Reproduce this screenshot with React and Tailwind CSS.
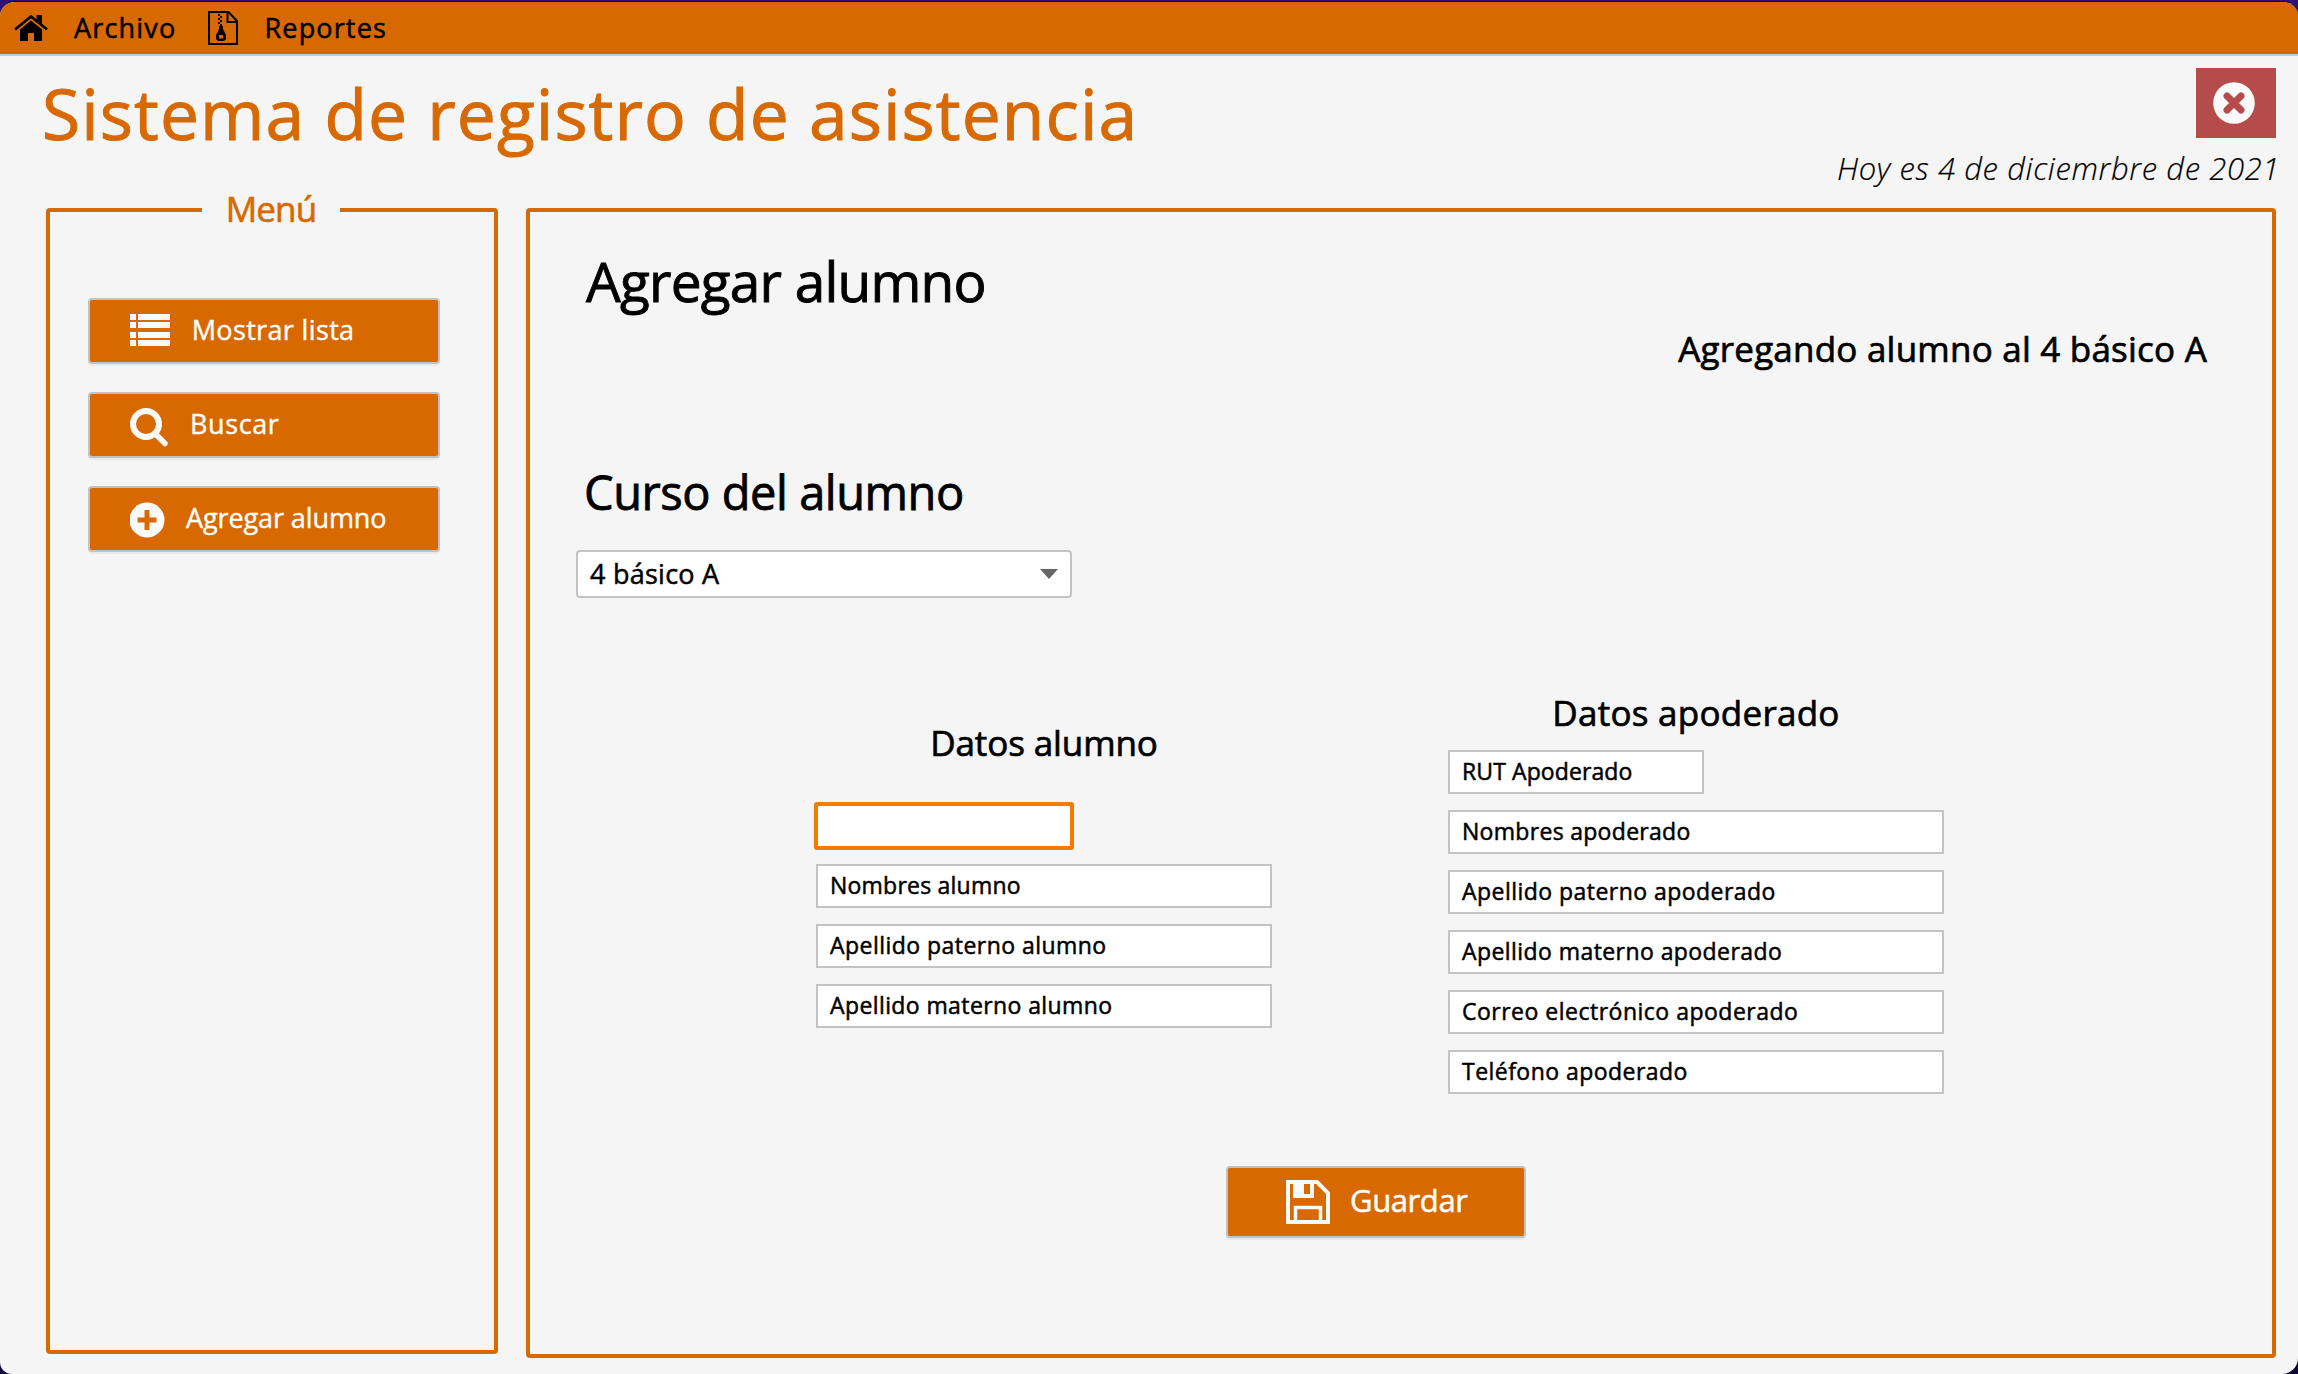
import React from "react";

function HomeIcon() {
  return (
    <svg className="ml-3.5 h-[28px] w-[34px]" viewBox="0 0 34 28">
      <path d="M1 15.500 L17 2.500 L33 15.500" fill="none" stroke="black" strokeWidth="2.8" />
      <path d="M22.500 1h5.500v9l-5.500-4.500z" />
      <path d="M17 6.500 28 15.500V27H20V19H14V27H6V15.500z" />
    </svg>
  );
}

function ZipIcon() {
  return (
    <svg className="h-[34px] w-[30px]" viewBox="0 0 30 34">
      <path d="M1 1H20.500L29 10V33H1z" fill="none" stroke="black" strokeWidth="2" />
      <path d="M19.500 1V11H29" fill="none" stroke="black" strokeWidth="2" />
      <path d="M10 3h2v2h-2zM12 5h2v2h-2zM10 7h2v2h-2zM12 9h2v2h-2zM10 11h2v2h-2zM12 13h2v2h-2z" />
      <path d="M11 15h4v3l3 6v4l-2 2h-6l-2-2v-4l3-6zM11 24v3.500h4V24z" fillRule="evenodd" />
    </svg>
  );
}

function ListIcon() {
  return (
    <svg className="size-11 shrink-0" viewBox="0 0 44 44" fill="#fafafa">
      {[6, 14, 24, 32].map((y) => (
        <g key={y}>
          <rect x="0" y={y} width="6" height="6" />
          <rect x="8" y={y} width="32" height="6" />
        </g>
      ))}
    </svg>
  );
}

function SearchIcon() {
  return (
    <svg className="size-11 shrink-0 overflow-visible" viewBox="0 0 44 44" fill="none" stroke="#fafafa">
      <circle cx="16" cy="22" r="13" strokeWidth="6" />
      <path d="M25.500 32 L35 41.500" strokeWidth="5.500" strokeLinecap="round" />
    </svg>
  );
}

function PlusIcon() {
  return (
    <svg className="size-11 shrink-0" viewBox="0 0 44 44">
      <circle cx="17" cy="24" r="17.500" fill="#fafafa" />
      <path d="M17 14V34M7.500 24H26.500" stroke="#d86900" strokeWidth="5" />
    </svg>
  );
}

function CloseIcon() {
  return (
    <svg className="ml-[17px] size-[42px]" viewBox="0 0 42 42">
      <circle cx="21" cy="21" r="20.800" fill="#fafafa" />
      <path d="M14 14 28 28M28 14 14 28" stroke="#b54c4b" strokeWidth="7" strokeLinecap="round" />
    </svg>
  );
}

function SaveIcon() {
  return (
    <svg className="size-11 shrink-0" viewBox="0 0 44 44">
      <path d="M2 2H31L42 13V42H2z" fill="none" stroke="#fafafa" strokeWidth="4" />
      <path d="M7 3H28V18H7zM18 4V14H24V4z" fill="#fafafa" fillRule="evenodd" />
      <path d="M9.500 41V27.500H34.500V41" fill="none" stroke="#fafafa" strokeWidth="3.500" />
    </svg>
  );
}

function MenuButton({ icon, textClass, children }) {
  return (
    <button className="flex h-[66px] w-[352px] items-center rounded-[4px] border-2 border-[#c2c2c2] bg-[#d86900] pb-0.5 pl-10 text-[27px] whitespace-nowrap text-white shadow-[0_2px_0_#e9e9e9] [-webkit-text-stroke:0.4px]">
      {icon}
      <span className={textClass}>{children}</span>
    </button>
  );
}

function Field({ className, textClass, children }) {
  return (
    <div className={"flex h-11 items-center border-2 border-[#c3c3c3] bg-white pb-px pl-3 text-[23px] whitespace-nowrap " + className}>
      <span className={textClass}>{children}</span>
    </div>
  );
}

export default function App() {
  return (
    <div className="h-[1374px] w-[2298px] overflow-hidden bg-linear-to-b from-[#2f1277] to-[#12073a] pt-px font-['Open_Sans',sans-serif] text-black">
      <div className="flex h-[1373px] flex-col overflow-hidden rounded-t-[15px] rounded-br-[16px] rounded-bl-[12px] border-t border-black bg-[#f5f5f5]">
        <nav className="flex h-[54px] shrink-0 items-center border-b-2 border-[#c9c9c9] bg-[#d86900] text-[27px] [-webkit-text-stroke:0.5px]">
          <HomeIcon />
          <span className="ml-[26px] w-[134px] tracking-[1.17px]">Archivo</span>
          <ZipIcon />
          <span className="ml-[26.5px] tracking-[1.15px]">Reportes</span>
        </nav>

        <header className="flex h-[134px] shrink-0 justify-between pr-[18px] pl-[42px]">
          <h1 className="flex h-[114px] items-center text-[69.5px] tracking-[1.1px] whitespace-nowrap text-[#d86900] [-webkit-text-stroke:1px]">
            Sistema de registro de asistencia
          </h1>
          <div className="flex flex-col items-end pt-3">
            <button className="mr-1 flex h-[70px] w-20 items-center bg-[#b54c4b]">
              <CloseIcon />
            </button>
            <p className="mt-2 flex h-11 items-center text-[31px] font-light tracking-[0.62px] whitespace-nowrap italic [-webkit-text-stroke:0.2px]">
              Hoy es 4 de diciemrbre de 2021
            </p>
          </div>
        </header>

        <div className="flex items-start pl-[46px]">
          <fieldset className="h-[1164px] w-[452px] rounded-[4px] border-4 border-[#d86900]">
            <legend className="ml-[152px] flex h-10 w-[138px] items-center justify-center text-[35px] text-[#d86900] [-webkit-text-stroke:0.6px]">
              <span className="pb-0.5 tracking-[-0.87px]">Menú</span>
            </legend>
            <div className="flex flex-col gap-7 pt-[68px] pl-[38px]">
              <MenuButton icon={<ListIcon />} textClass="ml-[17.7px] tracking-[0.35px]">Mostrar lista</MenuButton>
              <MenuButton icon={<SearchIcon />} textClass="ml-4 tracking-[0.6px]">Buscar</MenuButton>
              <MenuButton icon={<PlusIcon />} textClass="ml-3 tracking-[-0.1px]">Agregar alumno</MenuButton>
            </div>
          </fieldset>

          <main className="mt-[18px] ml-7 flex h-[1150px] w-[1750px] flex-col rounded-[4px] border-4 border-[#d86900] [-webkit-text-stroke:0.5px]">
            <h2 className="mt-10 ml-14 flex h-[58px] items-center text-[55px] tracking-[-0.81px] [-webkit-text-stroke:0.9px]">Agregar alumno</h2>
            <p className="mt-[19px] mr-[65px] flex h-10 items-center justify-end text-[35px] tracking-[0.22px] [-webkit-text-stroke:0.7px]">
              Agregando alumno al 4 básico A
            </p>
            <h3 className="mt-[97px] ml-[54px] flex h-[52px] items-center text-[47px] tracking-[-0.46px] [-webkit-text-stroke:0.8px]">Curso del alumno</h3>
            <div className="mt-8 ml-[46px] flex h-12 w-[496px] shrink-0 items-center justify-between rounded-[4px] border-2 border-[#c3c3c3] bg-white pr-3 pl-3 text-[27px]">
              <span className="tracking-[0.25px]">4 básico A</span>
              <svg className="h-2.5 w-[18px]" viewBox="0 0 18 10">
                <path d="M0 0H18L9 10z" fill="#666666" />
              </svg>
            </div>

            <div className="mt-[92px] ml-[284px] flex items-start">
              <section className="flex w-[460px] flex-col pt-[31px]">
                <h4 className="flex h-11 items-center justify-center text-[35px] tracking-[-0.1px] [-webkit-text-stroke:0.7px]">Datos alumno</h4>
                <div className="mt-[37px] h-12 w-[260px] rounded-[3px] border-4 border-[#f57c00] bg-white" />
                <div className="mt-3.5 ml-0.5 flex flex-col gap-4">
                  <Field className="w-[456px]" textClass="tracking-[0.22px]">Nombres alumno</Field>
                  <Field className="w-[456px]" textClass="tracking-[0.46px]">Apellido paterno alumno</Field>
                  <Field className="w-[456px]" textClass="tracking-[0.4px]">Apellido materno alumno</Field>
                </div>
              </section>
              <section className="ml-[174px] flex w-[496px] flex-col pt-px">
                <h4 className="flex h-11 items-center justify-center text-[35px] tracking-[0.27px] [-webkit-text-stroke:0.7px]">Datos apoderado</h4>
                <div className="mt-[15px] flex flex-col gap-4">
                  <Field className="w-64" textClass="tracking-[0.1px]">RUT Apoderado</Field>
                  <Field className="w-[496px]" textClass="tracking-[0.3px]">Nombres apoderado</Field>
                  <Field className="w-[496px]" textClass="tracking-[0.46px]">Apellido paterno apoderado</Field>
                  <Field className="w-[496px]" textClass="tracking-[0.43px]">Apellido materno apoderado</Field>
                  <Field className="w-[496px]" textClass="tracking-[0.5px]">Correo electrónico apoderado</Field>
                  <Field className="w-[496px]" textClass="tracking-[0.46px]">Teléfono apoderado</Field>
                </div>
              </section>
            </div>

            <button className="mt-[72px] ml-[696px] flex h-[72px] w-[300px] shrink-0 items-center rounded-[4px] border-2 border-[#c2c2c2] bg-[#d86900] pl-[58px] text-[31px] text-white shadow-[0_2px_0_#e9e9e9]">
              <SaveIcon />
              <span className="ml-5 pb-1 tracking-[-0.4px]">Guardar</span>
            </button>
          </main>
        </div>
      </div>
    </div>
  );
}
